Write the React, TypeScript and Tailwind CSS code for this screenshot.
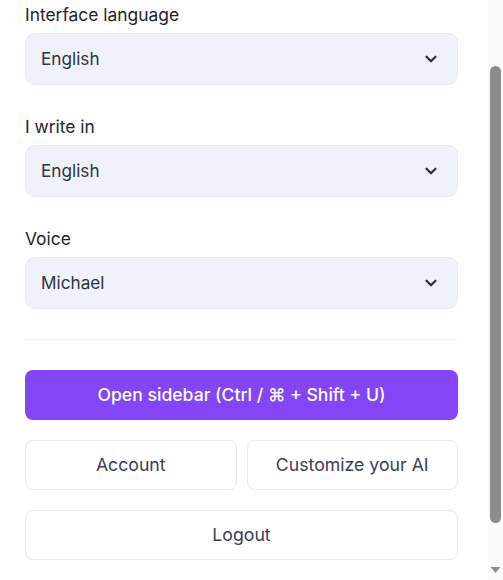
import { ChevronDown } from "lucide-react";

const selects = [
  { label: "Interface language", value: "English" },
  { label: "I write in", value: "English" },
  { label: "Voice", value: "Michael" },
];

function SelectField({ label, value }: { label: string; value: string }) {
  return (
    <div className="flex flex-col gap-[6px]">
      <span className="text-[17.4px] leading-6 text-[#1f2430]">{label}</span>
      <button
        type="button"
        className="flex h-[52px] w-full items-center justify-between rounded-[10px] border border-[#e6e9f2] bg-[#eff2fb] pl-[15px] pr-[17px] text-left text-[17.2px] text-[#2d3340]"
      >
        <span>{value}</span>
        <ChevronDown className="h-[18px] w-[18px] text-[#2b3140]" strokeWidth={3} />
      </button>
    </div>
  );
}

// static picture of the browser scrollbar seen in the screenshot
function FakeScrollbar() {
  return (
    <div className="flex h-full w-[15px] shrink-0 flex-col items-center bg-[#fafafa]">
      <div className="h-[66px]" />
      <div className="h-[457px] w-[11px] rounded-full bg-[#8c8c8c]" />
      <div className="flex-1" />
      <svg width="11" height="8" viewBox="0 0 11 8" className="mb-[6px]">
        <path d="M0.5 1 L10.5 1 L5.5 7 Z" fill="#8c8c8c" />
      </svg>
    </div>
  );
}

export default function App() {
  return (
    <div className="flex h-screen overflow-hidden bg-white font-['Inter','Noto_Sans',sans-serif]">
      <div className="flex min-w-0 flex-1 flex-col pl-[25px] pr-[30px] pt-[3px]">
        <div className="flex flex-col gap-[30px]">
          {selects.map((s) => (
            <SelectField key={s.label} label={s.label} value={s.value} />
          ))}
        </div>

        <div className="mt-[30px] h-px bg-[#f0f1f5]" />

        <button
          type="button"
          className="mt-[30px] h-[50px] w-full rounded-[8px] bg-[#8445f7] text-[17.6px] font-medium text-white"
        >
          Open sidebar (Ctrl / ⌘ + Shift + U)
        </button>

        <div className="mt-5 grid grid-cols-2 gap-[10px]">
          <button
            type="button"
            className="h-[50px] rounded-[8px] border border-[#e8e9ee] bg-white text-[17.7px] text-[#374052]"
          >
            Account
          </button>
          <button
            type="button"
            className="h-[50px] rounded-[8px] border border-[#e8e9ee] bg-white text-[17.7px] text-[#374052]"
          >
            Customize your AI
          </button>
        </div>

        <button
          type="button"
          className="mt-5 h-[50px] w-full rounded-[8px] border border-[#e8e9ee] bg-white text-[17.7px] text-[#374052]"
        >
          Logout
        </button>
      </div>
      <FakeScrollbar />
    </div>
  );
}
